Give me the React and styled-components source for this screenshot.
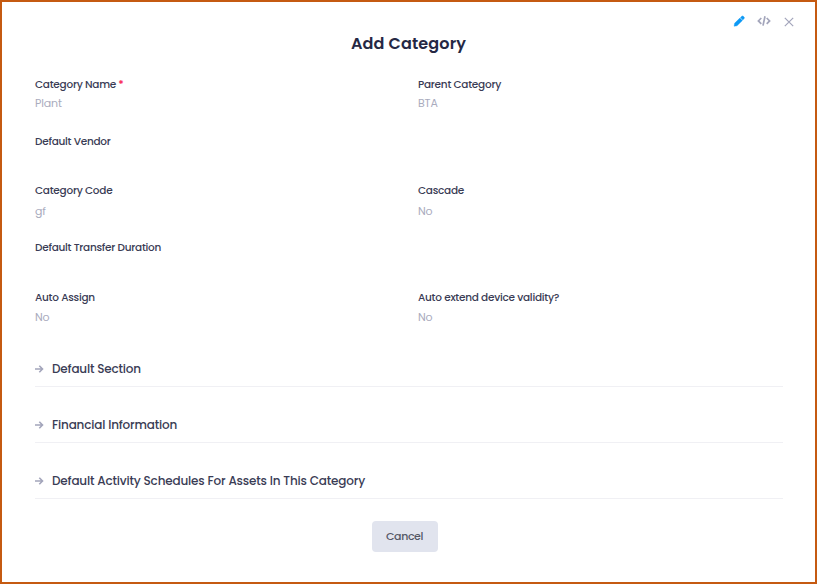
import React from 'react';
import styled, {createGlobalStyle} from 'styled-components';

const GlobalStyle = createGlobalStyle`
    * {
        box-sizing: border-box;
    }
    body {
        margin: 0;
        background: #fff;
        font-family: Poppins, Inter, "Open Sans", sans-serif;
    }
`;

const Modal = styled.div`
    display: flex;
    flex-direction: column;
    width: 817px;
    height: 584px;
    padding: 12px 32px 0 33px;
    border: 2px solid #c55a11;
    background: #fff;
    overflow: hidden;
`;

const Toolbar = styled.div`
    display: flex;
    justify-content: flex-end;
    align-items: center;
    height: 14px;
    gap: 12px;
    margin-right: -12px;
`;

const IconButton = styled.button`
    display: flex;
    padding: 0;
    border: 0;
    background: none;
    color: ${props => props.$active ? '#0d99f5' : '#a3a5bb'};
    cursor: pointer;
`;

const Title = styled.h1`
    margin: 5px 0 0 -1px;
    color: #252844;
    font-size: 16px;
    line-height: 22px;
    font-weight: 600;
    letter-spacing: 0.15px;
    text-align: center;
    white-space: nowrap;
`;

const Fields = styled.div`
    display: grid;
    grid-template-columns: 383px 1fr;
    grid-template-rows: 57px 49px 57px 50px 61px;
    margin-top: 22px;
`;

const Field = styled.div`
    display: flex;
    flex-direction: column;
    align-items: flex-start;
    grid-column: ${props => props.$column || 1};
    gap: ${props => props.$gap || 3}px;
`;

const Label = styled.span`
    color: #3a3c55;
    font-size: 10.5px;
    line-height: 16px;
    font-weight: 500;
    letter-spacing: -0.26px;
    white-space: nowrap;
`;

const Required = styled.span`
    color: #f81e58;
    font-weight: 600;
`;

const Value = styled.span`
    color: #a9abbd;
    font-size: 11px;
    line-height: 16px;
    letter-spacing: -0.15px;
`;

const Section = styled.div`
    display: flex;
    align-items: center;
    flex: none;
    gap: 8px;
    height: 36px;
    margin-bottom: 20px;
    border-bottom: 1px solid #f0f0f4;
    color: #a3a5bb;
`;

const SectionTitle = styled.span`
    color: #3a3c55;
    font-size: 12px;
    line-height: 18px;
    font-weight: 500;
    letter-spacing: -0.17px;
    white-space: nowrap;
`;

const CancelButton = styled.button`
    align-self: center;
    flex: none;
    width: 66px;
    height: 31px;
    margin: 2px 0 0 -9px;
    padding: 0;
    border: 0;
    border-radius: 4px;
    background: #e1e4ee;
    color: #555867;
    font-family: inherit;
    font-size: 11px;
    font-weight: 500;
    letter-spacing: -0.4px;
`;

const PencilIcon = () => (
    <svg width="12" height="12" viewBox="0 0 12 12" fill="currentColor" stroke="currentColor" strokeWidth="0.4">
        <path d="M1.1 11.2 1.6 8.3 6.9 3 9.4 5.5 4 10.8zM7.5 2.5 8.8 1.2Q9.5.6 10.2 1.2L11.1 2.1Q11.7 2.9 11.1 3.6L9.9 4.9z" />
    </svg>
);

const CodeIcon = () => (
    <svg width="14" height="12" viewBox="0 0 14 12" fill="none" stroke="currentColor" strokeWidth="1.7">
        <path d="M4.3 3 1.4 5.9l2.9 2.9M9.7 3 12.6 5.9 9.7 8.8M8 1.2 6 10.6" />
    </svg>
);

const CloseIcon = () => (
    <svg width="12" height="14" viewBox="0 0 12 14" fill="none" stroke="currentColor" strokeWidth="1.2">
        <path d="m1.8 3.8 8.4 8.4M10.2 3.8l-8.4 8.4" />
    </svg>
);

const ArrowIcon = () => (
    <svg width="9" height="10" viewBox="0 0 9 10" fill="none" stroke="currentColor" strokeWidth="1.6">
        <path d="M0 5h7.6M4.3 1.8 7.5 5 4.3 8.2" />
    </svg>
);

const fields = [
    {label: 'Category Name', value: 'Plant', required: true, gap: 2},
    {label: 'Parent Category', value: 'BTA', column: 2, gap: 2},
    {label: 'Default Vendor'},
    {label: 'Category Code', value: 'gf', gap: 4},
    {label: 'Cascade', value: 'No', column: 2, gap: 4},
    {label: 'Default Transfer Duration'},
    {label: 'Auto Assign', value: 'No'},
    {label: 'Auto extend device validity?', value: 'No', column: 2},
];

const sections = [
    'Default Section',
    'Financial Information',
    'Default Activity Schedules For Assets In This Category',
];

export default function App() {
    return (
        <>
            <GlobalStyle />
            <Modal>
                <Toolbar>
                    <IconButton $active aria-label="Edit"><PencilIcon /></IconButton>
                    <IconButton aria-label="Code"><CodeIcon /></IconButton>
                    <IconButton aria-label="Close"><CloseIcon /></IconButton>
                </Toolbar>
                <Title>Add Category</Title>
                <Fields>
                    {fields.map(field => (
                        <Field key={field.label} $column={field.column} $gap={field.gap}>
                            <Label>
                                {field.label}
                                {field.required && <Required> *</Required>}
                            </Label>
                            {field.value && <Value>{field.value}</Value>}
                        </Field>
                    ))}
                </Fields>
                {sections.map(title => (
                    <Section key={title}>
                        <ArrowIcon />
                        <SectionTitle>{title}</SectionTitle>
                    </Section>
                ))}
                <CancelButton>Cancel</CancelButton>
            </Modal>
        </>
    );
}
